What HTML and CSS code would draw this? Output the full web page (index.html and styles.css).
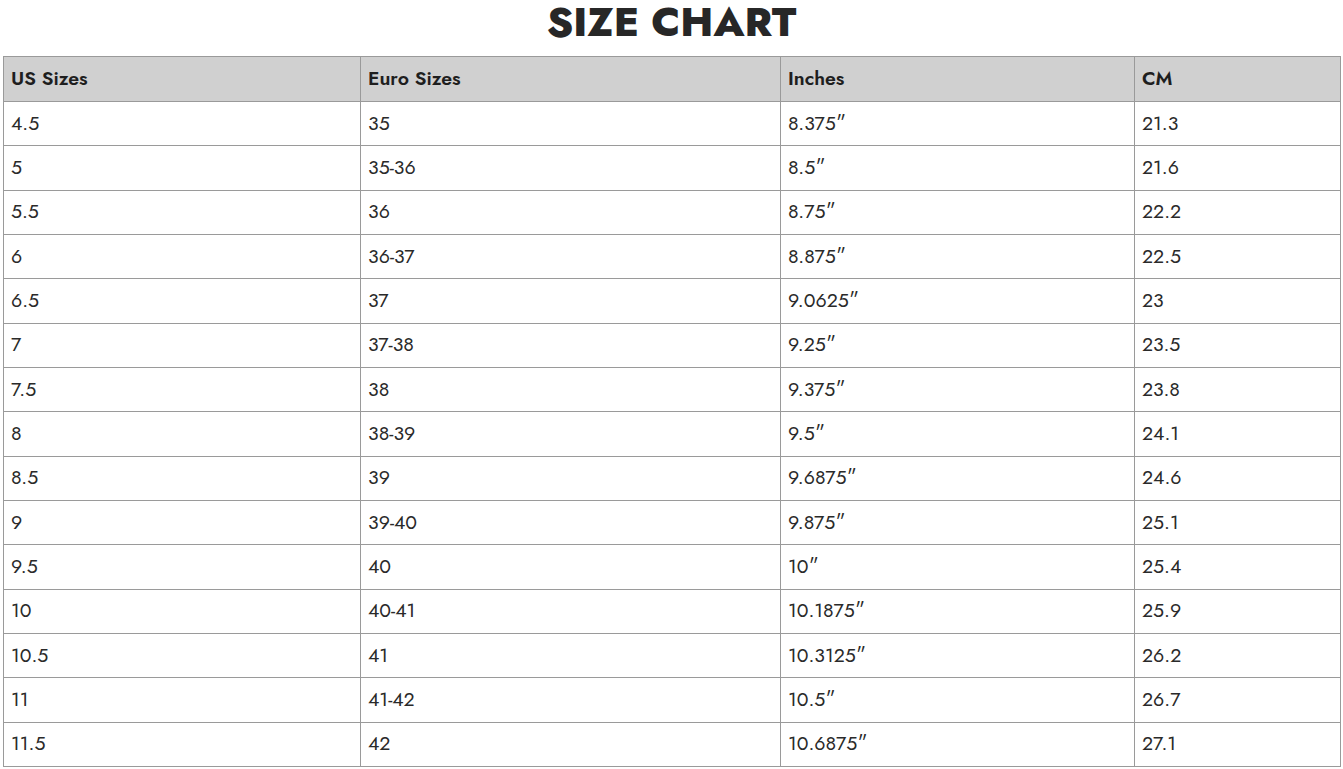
FILE: index.html
```html
<!DOCTYPE html>
<html>
<head>
<meta charset="utf-8">
<link rel="stylesheet" href="styles.css">
</head>
<body>
<div class="page">
  <h1 class="title">SIZE CHART</h1>
  <table class="chart">
    <colgroup>
      <col class="c1"><col class="c2"><col class="c3"><col class="c4">
    </colgroup>
    <thead>
      <tr><th>US Sizes</th><th>Euro Sizes</th><th>Inches</th><th>CM</th></tr>
    </thead>
    <tbody>
      <tr><td>4.5</td><td>35</td><td>8.375″</td><td>21.3</td></tr>
      <tr><td>5</td><td>35-36</td><td>8.5″</td><td>21.6</td></tr>
      <tr><td>5.5</td><td>36</td><td>8.75″</td><td>22.2</td></tr>
      <tr><td>6</td><td>36-37</td><td>8.875″</td><td>22.5</td></tr>
      <tr><td>6.5</td><td>37</td><td>9.0625″</td><td>23</td></tr>
      <tr><td>7</td><td>37-38</td><td>9.25″</td><td>23.5</td></tr>
      <tr><td>7.5</td><td>38</td><td>9.375″</td><td>23.8</td></tr>
      <tr><td>8</td><td>38-39</td><td>9.5″</td><td>24.1</td></tr>
      <tr><td>8.5</td><td>39</td><td>9.6875″</td><td>24.6</td></tr>
      <tr><td>9</td><td>39-40</td><td>9.875″</td><td>25.1</td></tr>
      <tr><td>9.5</td><td>40</td><td>10″</td><td>25.4</td></tr>
      <tr><td>10</td><td>40-41</td><td>10.1875″</td><td>25.9</td></tr>
      <tr><td>10.5</td><td>41</td><td>10.3125″</td><td>26.2</td></tr>
      <tr><td>11</td><td>41-42</td><td>10.5″</td><td>26.7</td></tr>
      <tr><td>11.5</td><td>42</td><td>10.6875″</td><td>27.1</td></tr>
    </tbody>
  </table>
</div>
</body>
</html>
```
FILE: styles.css
```css
html, body {
  margin: 0;
  padding: 0;
  background: #ffffff;
}
body {
  font-family: Jost, "Lato", "Open Sans", sans-serif;
  color: #222222;
}
.page {
  padding: 0 3px;
}
.title {
  margin: 0;
  height: 56px;
  font-size: 41px;
  line-height: 44px;
  font-weight: 800;
  text-align: center;
  color: #272727;
}
.chart {
  width: 1337px;
  border-collapse: collapse;
  table-layout: fixed;
  font-size: 19.5px;
}
.c1 { width: 357px; }
.c2 { width: 420px; }
.c3 { width: 354px; }
.c4 { width: 206px; }
.chart th,
.chart td {
  border: 1px solid #9a9a9a;
  text-align: left;
  padding: 0 7px 2px;
  vertical-align: middle;
}
.chart th {
  background: #d0d0d0;
  height: 42px;
  font-weight: 600;
  color: #1e1e1e;
}
.chart td {
  height: 41.35px;
  font-weight: 400;
  color: #2a2a2a;
}
```
